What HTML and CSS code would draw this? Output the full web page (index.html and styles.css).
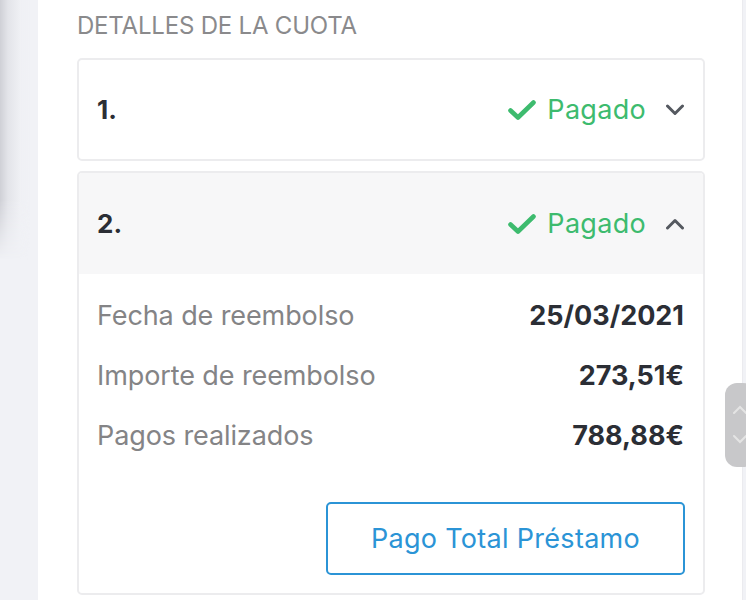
FILE: index.html
```html
<!DOCTYPE html>
<html lang="es">
<head>
<meta charset="utf-8">
<link rel="stylesheet" href="styles.css">
</head>
<body>
<div class="page">
  <div class="side"><div class="side-shadow"></div></div>
  <main class="panel">
    <h2 class="title">DETALLES DE LA CUOTA</h2>
    <section class="card">
      <div class="card-head">
        <span class="num">1.</span>
        <span class="status">
          <svg class="check" viewBox="0 0 28 20" width="28" height="20"><path d="M2.5 10.5 L10 17.5 L25.5 2.5" fill="none" stroke="#3dbb6e" stroke-width="4.6" stroke-linecap="round" stroke-linejoin="round"/></svg>
          <span class="paid">Pagado</span>
          <svg class="chev" viewBox="0 0 20 12" width="20" height="12"><path d="M2.5 2 L10 9.5 L17.5 2" fill="none" stroke="#555960" stroke-width="3" stroke-linecap="round" stroke-linejoin="round"/></svg>
        </span>
      </div>
    </section>
    <section class="card open">
      <div class="card-head shaded">
        <span class="num">2.</span>
        <span class="status">
          <svg class="check" viewBox="0 0 28 20" width="28" height="20"><path d="M2.5 10.5 L10 17.5 L25.5 2.5" fill="none" stroke="#3dbb6e" stroke-width="4.6" stroke-linecap="round" stroke-linejoin="round"/></svg>
          <span class="paid">Pagado</span>
          <svg class="chev" viewBox="0 0 20 12" width="20" height="12"><path d="M2.5 10 L10 2.5 L17.5 10" fill="none" stroke="#555960" stroke-width="3" stroke-linecap="round" stroke-linejoin="round"/></svg>
        </span>
      </div>
      <div class="card-body">
        <div class="row"><span class="label">Fecha de reembolso</span><span class="value">25/03/2021</span></div>
        <div class="row"><span class="label">Importe de reembolso</span><span class="value">273,51€</span></div>
        <div class="row"><span class="label">Pagos realizados</span><span class="value">788,88€</span></div>
        <div class="actions"><button class="btn">Pago Total Préstamo</button></div>
      </div>
    </section>
  </main>
  <div class="scroller">
    <svg viewBox="0 0 22 84" width="22" height="84"><path d="M9 30 L15 24 L21 30" fill="none" stroke="#e4e4e4" stroke-width="2" stroke-linecap="round"/><path d="M9 53 L15 59 L21 53" fill="none" stroke="#e4e4e4" stroke-width="2" stroke-linecap="round"/></svg>
  </div>
</div>
</body>
</html>
```
FILE: styles.css
```css
html, body { margin: 0; padding: 0; }
body {
  background: #f1f2f6;
  font-family: Inter, "Noto Sans", sans-serif;
  width: 746px;
  height: 600px;
  overflow: hidden;
}
.page {
  position: relative;
  display: flex;
  height: 600px;
}
.side {
  position: relative;
  flex: 0 0 38px;
  background: #f1f2f6;
}
.side-shadow {
  position: absolute;
  left: 0;
  top: 0;
  width: 30px;
  height: 260px;
  background: linear-gradient(to right, #cfd0d6 0, #e3e4e9 8px, #eff0f4 20px, rgba(241,242,246,0) 30px);
  -webkit-mask-image: linear-gradient(to bottom, #000 0, #000 200px, transparent 260px);
  mask-image: linear-gradient(to bottom, #000 0, #000 200px, transparent 260px);
}
.panel {
  flex: 0 0 705px;
  background: #fff;
  border-right: 1px solid #ebebef;
  padding: 11px 37px 0 39px;
  box-sizing: border-box;
}
.title {
  margin: 0 0 17px 0;
  font-weight: 400;
  font-size: 24px;
  line-height: 30px;
  letter-spacing: -0.2px;
  color: #8a8a8c;
}
.card {
  border: 2px solid #ececee;
  border-radius: 5px;
  margin-bottom: 10px;
  overflow: hidden;
}
.card-head {
  height: 99px;
  display: flex;
  align-items: center;
  justify-content: space-between;
  padding: 0 18px;
}
.card-head.shaded { height: 101px; background: #f7f7f8; }
.num {
  font-size: 26px;
  font-weight: 700;
  color: #2b2e35;
}
.status {
  display: flex;
  align-items: center;
}
.check { margin-right: 11px; }
.paid {
  font-size: 27px;
  font-weight: 400;
  letter-spacing: 0.3px;
  color: #3dbb6e;
  margin-right: 19px;
}
.card-body {
  padding: 11px 19px 18px 18px;
}
.row {
  height: 60px;
  display: flex;
  align-items: center;
  justify-content: space-between;
}
.label {
  font-size: 27px;
  color: #848486;
  letter-spacing: -0.1px;
}
.value {
  font-size: 27px;
  font-weight: 700;
  color: #2b2e35;
}
.actions {
  display: flex;
  justify-content: flex-end;
  margin-top: 37px;
  margin-right: -1px;
}
.btn {
  box-sizing: border-box;
  width: 359px;
  height: 73px;
  border: 2px solid #2b94d6;
  border-radius: 5px;
  background: #fff;
  color: #2b94d6;
  font-family: Inter, "Noto Sans", sans-serif;
  font-size: 27px;
  letter-spacing: 0.3px;
}
.scroller {
  position: absolute;
  left: 725px;
  top: 383px;
  width: 30px;
  height: 84px;
  border-radius: 12px;
  background: #c8c8ca;
}
.scroller svg { position: absolute; left: 0; top: 0; }
```
